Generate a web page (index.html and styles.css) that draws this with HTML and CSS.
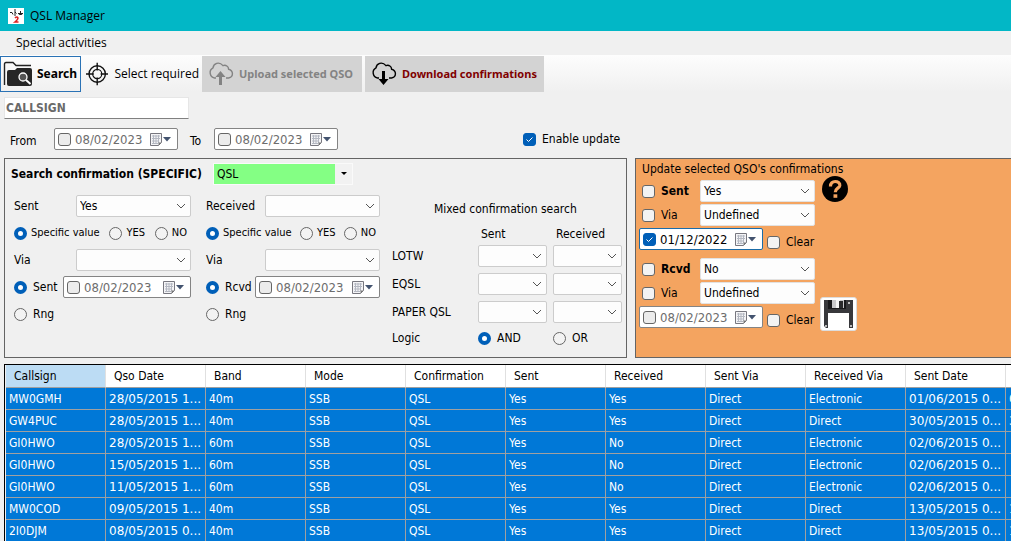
FILE: index.html
```html
<!DOCTYPE html>
<html lang="en">
<head>
<meta charset="utf-8">
<title>QSL Manager</title>
<link rel="stylesheet" href="styles.css">
</head>
<body>
<svg width="0" height="0" class="defs" aria-hidden="true">
  <symbol id="cal" viewBox="0 0 22 13">
    <path d="M.5.5h11v9l-3 3h-8z" fill="#f4f4f6" stroke="#77777f"/>
    <path d="M2 3h8M2 5.500h8M2 8h7M2 10.500h6M3.500 2v9M6 2v9M8.500 2v8" stroke="#b4b8c2" fill="none"/>
    <path d="M8.500 12.500v-3h3z" fill="#777"/>
    <path d="M13 4h8l-4 4.500z" fill="#43536f"/>
  </symbol>
  <symbol id="cloud" viewBox="0 0 26 26">
    <path d="M8 17H6.500a5.500 5.500 0 0 1-1.500-10.200C5.500 2.500 11 0 15 4.600c3-1 5.500.9 5.600 3.600 5.200 1.300 5 8.200 0 8.800H18" fill="none" stroke="currentColor" stroke-width="1.400"/>
  </symbol>
</svg>

<header class="titlebar">
  <svg class="app-icon" viewBox="0 0 16 16" aria-hidden="true"><path fill="#fff" d="M0 0h16v16H0z"/><path d="M2 4.500h2l1 2M7 1v7M7 4l1.500 1.500M10 5.500h5M12.500 3v4M11 7l1.500-2 1.500 2" fill="none" stroke="#222"/><path d="M7 10q2-2 3 0 0 1.500-3 4h3.500" fill="none" stroke="#d22" stroke-width="1.600"/></svg>
  <h1>QSL Manager</h1>
</header>
<nav class="menubar"><button type="button">Special activities</button></nav>

<div class="toolbar">
  <button type="button" class="tool search">
    <svg width="31" height="26" viewBox="0 0 31 26" aria-hidden="true"><path d="M1.500 24V3q0-1.500 1.500-1.500h7l3 3h15" fill="none" stroke="#222" stroke-width="1.400"/><path d="M4 11q0-2 2-2h6l2-2h13q2 0 2 2v14q0 2-2 2H6q-2 0-2-2z" fill="#262626"/><circle cx="20" cy="16" r="4" fill="#555" stroke="#fff" stroke-width="1.300"/><path d="M23 19l4.500 4" stroke="#fff" stroke-width="2"/></svg>
    Search
  </button>
  <button type="button" class="tool required">
    <svg width="26" height="26" viewBox="0 0 26 26" aria-hidden="true"><g fill="none" stroke="#111"><circle cx="13" cy="13" r="9.500" stroke-width="1.600"/><circle cx="13" cy="13" r="5.300" stroke-width="1.300"/><path d="M13 0v9M13 17v9M0 13h9M17 13h9" stroke-width="1.600"/></g></svg>
    Select required
  </button>
  <button type="button" class="tool upload" disabled>
    <svg width="26" height="26" viewBox="0 0 26 26" aria-hidden="true"><use href="#cloud"/><path d="M12.500 10l5 6h-3.500v8h-3v-8H7.500z" fill="currentColor"/></svg>
    Upload selected QSO
  </button>
  <button type="button" class="tool download">
    <svg width="26" height="26" viewBox="0 0 26 26" aria-hidden="true"><use href="#cloud"/><path d="M12.500 24l5-6h-3.500v-8h-3v8H7.500z" fill="currentColor"/></svg>
    <span>Download confirmations</span>
  </button>
</div>

<main>
  <input class="callsign" type="text" placeholder="CALLSIGN" aria-label="Callsign">

  <div class="range">
    <label for="from">From</label>
    <div class="datepick"><input type="checkbox" aria-label="Use from date"><input type="text" id="from" value="08/02/2023"><button type="button" aria-label="Open calendar"><svg><use href="#cal"/></svg></button></div>
    <label for="to">To</label>
    <div class="datepick"><input type="checkbox" aria-label="Use to date"><input type="text" id="to" value="08/02/2023"><button type="button" aria-label="Open calendar"><svg><use href="#cal"/></svg></button></div>
    <label class="enable"><input type="checkbox" checked>Enable update</label>
  </div>

  <div class="panels">
    <section class="panel find">
      <div class="heading">
        <label for="mode">Search confirmation (SPECIFIC)</label>
        <select id="mode" class="mode"><option>QSL</option></select>
      </div>
      <div class="columns">
        <div class="col sent">
          <div class="row split"><label for="s1">Sent</label><select id="s1"><option>Yes</option></select></div>
          <div class="row radios">
            <label><input type="radio" name="sv" checked>Specific value</label>
            <label><input type="radio" name="sv">YES</label>
            <label><input type="radio" name="sv">NO</label>
          </div>
          <div class="row split"><label for="s2">Via</label><select id="s2"><option></option></select></div>
          <div class="row split">
            <label><input type="radio" name="sd" checked>Sent</label>
            <div class="datepick"><input type="checkbox" aria-label="Use sent date"><input type="text" aria-label="Sent date" value="08/02/2023"><button type="button" aria-label="Open calendar"><svg><use href="#cal"/></svg></button></div>
          </div>
          <div class="row"><label><input type="radio" name="sd">Rng</label></div>
        </div>
        <div class="col rcvd">
          <div class="row split"><label for="r1">Received</label><select id="r1"><option></option></select></div>
          <div class="row radios">
            <label><input type="radio" name="rv" checked>Specific value</label>
            <label><input type="radio" name="rv">YES</label>
            <label><input type="radio" name="rv">NO</label>
          </div>
          <div class="row split"><label for="r2">Via</label><select id="r2"><option></option></select></div>
          <div class="row split">
            <label><input type="radio" name="rd" checked>Rcvd</label>
            <div class="datepick"><input type="checkbox" aria-label="Use received date"><input type="text" aria-label="Received date" value="08/02/2023"><button type="button" aria-label="Open calendar"><svg><use href="#cal"/></svg></button></div>
          </div>
          <div class="row"><label><input type="radio" name="rd">Rng</label></div>
        </div>
        <div class="mixed">
          <h2>Mixed confirmation search</h2>
          <div class="mixgrid">
            <span></span><span class="mixhead">Sent</span><span class="mixhead">Received</span>
            <span>LOTW</span><select aria-label="LOTW sent"></select><select aria-label="LOTW received"></select>
            <span>EQSL</span><select aria-label="EQSL sent"></select><select aria-label="EQSL received"></select>
            <span>PAPER QSL</span><select aria-label="Paper QSL sent"></select><select aria-label="Paper QSL received"></select>
            <span class="logic">Logic</span>
            <label class="logic"><input type="radio" name="logic" checked>AND</label>
            <label class="logic"><input type="radio" name="logic">OR</label>
          </div>
        </div>
      </div>
    </section>

    <section class="panel update">
      <h2>Update selected QSO's confirmations</h2>
      <div class="update-body">
        <div class="fields">
          <div class="field"><label class="strong"><input type="checkbox">Sent</label><select aria-label="Sent"><option>Yes</option></select></div>
          <div class="field"><label><input type="checkbox">Via</label><select aria-label="Sent via"><option>Undefined</option></select></div>
          <div class="dateline">
            <div class="datepick active"><input type="checkbox" checked aria-label="Use sent date"><input type="text" aria-label="Sent date" value="01/12/2022"><button type="button" aria-label="Open calendar"><svg><use href="#cal"/></svg></button></div>
            <label><input type="checkbox">Clear</label>
          </div>
          <div class="field second"><label class="strong"><input type="checkbox">Rcvd</label><select aria-label="Received"><option>No</option></select></div>
          <div class="field"><label><input type="checkbox">Via</label><select aria-label="Received via"><option>Undefined</option></select></div>
          <div class="dateline">
            <div class="datepick"><input type="checkbox" aria-label="Use received date"><input type="text" aria-label="Received date" value="08/02/2023"><button type="button" aria-label="Open calendar"><svg><use href="#cal"/></svg></button></div>
            <label><input type="checkbox">Clear</label>
          </div>
        </div>
        <div class="actions">
          <button type="button" class="help" aria-label="Help"><svg width="26" height="26" viewBox="0 0 26 26"><circle cx="13" cy="13" r="13"/><path d="M8.500 10.500C8 3.500 18.500 4.500 17.800 9.500 17.300 12.500 13.300 12 13.300 16.300" fill="none" stroke="#f4a460" stroke-width="3.200"/><path d="M11.500 18.300h3.800v3.500h-3.800z" fill="#f4a460"/></svg></button>
          <button type="button" class="save" aria-label="Save"><svg width="29" height="28" viewBox="0 0 29 28"><path d="M0 0h29v28H2l-2-2z" fill="#38383b"/><path d="M4 0h18v9H4z" fill="#19191b"/><path d="M8 0h12v8H8z" fill="#c8c8ca"/><path d="M12 0h4v8h-4z" fill="#f4f4f4"/><path d="M15 1h4v7h-4z" fill="#29292b"/><path d="M4 13h21v15H4z" fill="#fff"/><path d="M24 2h2v2h-2zM1 25h2v2H1zM26 25h2v2h-2z" fill="#bbb"/></svg></button>
        </div>
      </div>
    </section>
  </div>

  <div class="grid-wrap">
    <table>
      <thead><tr><th class="current">Callsign</th><th>Qso Date</th><th>Band</th><th>Mode</th><th>Confirmation</th><th>Sent</th><th>Received</th><th>Sent Via</th><th>Received Via</th><th>Sent Date</th><th></th></tr></thead>
      <tbody>
        <tr><td>MW0GMH</td><td class="date">28/05/2015 1...</td><td>40m</td><td>SSB</td><td>QSL</td><td>Yes</td><td>Yes</td><td>Direct</td><td>Electronic</td><td class="date">01/06/2015 0...</td><td class="date">0</td></tr>
        <tr><td>GW4PUC</td><td class="date">28/05/2015 1...</td><td>40m</td><td>SSB</td><td>QSL</td><td>Yes</td><td>Yes</td><td>Direct</td><td>Direct</td><td class="date">30/05/2015 0...</td><td class="date">3</td></tr>
        <tr><td>GI0HWO</td><td class="date">28/05/2015 1...</td><td>60m</td><td>SSB</td><td>QSL</td><td>Yes</td><td>No</td><td>Direct</td><td>Electronic</td><td class="date">02/06/2015 0...</td><td></td></tr>
        <tr><td>GI0HWO</td><td class="date">15/05/2015 1...</td><td>60m</td><td>SSB</td><td>QSL</td><td>Yes</td><td>No</td><td>Direct</td><td>Electronic</td><td class="date">02/06/2015 0...</td><td></td></tr>
        <tr><td>GI0HWO</td><td class="date">11/05/2015 1...</td><td>60m</td><td>SSB</td><td>QSL</td><td>Yes</td><td>No</td><td>Direct</td><td>Electronic</td><td class="date">02/06/2015 0...</td><td></td></tr>
        <tr><td>MW0COD</td><td class="date">09/05/2015 1...</td><td>40m</td><td>SSB</td><td>QSL</td><td>Yes</td><td>Yes</td><td>Direct</td><td>Direct</td><td class="date">13/05/2015 0...</td><td class="date">1</td></tr>
        <tr><td>2I0DJM</td><td class="date">08/05/2015 0...</td><td>40m</td><td>SSB</td><td>QSL</td><td>Yes</td><td>Yes</td><td>Direct</td><td>Direct</td><td class="date">13/05/2015 0...</td><td class="date">1</td></tr>
      </tbody>
    </table>
  </div>
</main>
</body>
</html>
```
FILE: styles.css
```css
* { box-sizing: border-box; }
body {
  margin: 0;
  background: #f0f0f0;
  color: #000;
  font: 12px/16px "DejaVu Sans Condensed", "DejaVu Sans", sans-serif;
}
.defs { position: absolute; }
button, input, select { font: inherit; color: inherit; margin: 0; }
button { border: 0; background: none; padding: 0; }
h1, h2 { margin: 0; font-size: 12px; font-weight: normal; }
label { display: flex; align-items: center; white-space: nowrap; }

.titlebar {
  display: flex; align-items: center; gap: 6px;
  height: 31px; padding-left: 8px;
  background: #02b7c6;
  font-family: "Open Sans", sans-serif;
}
.app-icon { width: 16px; height: 16px; }
.menubar {
  display: flex; height: 24px; padding-left: 16px;
  font-family: "Open Sans", sans-serif;
}
.toolbar {
  display: flex; gap: 3px; height: 37px; padding-top: 1px;
  background: linear-gradient(#fdfdfd, #f0f0f0);
  font-family: "Noto Sans", sans-serif;
}
.tool { display: flex; align-items: center; height: 36px; padding: 0 6px; gap: 6px; white-space: nowrap; }
.search { width: 81px; border: 1px solid #2a72b5; padding: 0 0 0 2px; gap: 3px; font-weight: bold; }
.required { width: 115px; padding: 0 0 0 2px; font-family: "Open Sans", sans-serif; }
.upload, .download { gap: 5px; background: #d3d3d3; font-size: 11px; font-weight: bold; }
.upload { width: 160px; color: #838383; }
.download { width: 179px; }
.download span { color: #800000; }

main { padding: 5px 0 0 4px; }
.callsign {
  display: block; width: 185px; height: 22px; padding: 0 1px;
  border: 1px solid #e6e6e6; border-bottom-color: #808080;
  background: #fff; font-weight: bold;
}
.callsign::placeholder { color: #6a6a6a; opacity: 1; }

.range { display: flex; align-items: center; height: 22px; margin: 9px 0 8px; padding-left: 6px; }
.range > label:first-child { width: 44px; }
.range > label:nth-of-type(2) { width: 36px; padding-left: 12px; }
.range > label:not(.enable) { padding-top: 4px; }
.range .enable { margin-left: 185px; }

input[type="checkbox"] {
  appearance: none; flex: none; width: 13px; height: 13px; margin-right: 6px;
  border: 1px solid #666; border-radius: 3px; background: #f3f3f3;
}
input[type="checkbox"]:checked {
  border-color: #005fb8;
  background: #005fb8 url("data:image/svg+xml,%3Csvg xmlns='http://www.w3.org/2000/svg' viewBox='0 0 11 11'%3E%3Cpath d='M2.500 5.500l2 2 4-4' fill='none' stroke='white'/%3E%3C/svg%3E") center / 11px no-repeat;
}
input[type="radio"] {
  appearance: none; flex: none; width: 13px; height: 13px; margin-right: 6px;
  border: 1px solid #666; border-radius: 50%; background: #f3f3f3;
}
input[type="radio"]:checked { border: 4px solid #005fb8; background: #fff; }

select {
  appearance: none; min-width: 0; height: 22px; padding: 0 16px 0 3px;
  border: 1px solid #ccc; border-radius: 2px;
  background: #fdfdfd url("data:image/svg+xml,%3Csvg xmlns='http://www.w3.org/2000/svg' viewBox='0 0 10 6'%3E%3Cpath d='M1 1l4 4 4-4' fill='none' stroke='%23555'/%3E%3C/svg%3E") right 4px center / 10px 6px no-repeat;
}

.datepick {
  display: flex; align-items: center; width: 124px; height: 22px; padding: 0 5px 0 3px;
  border: 1px solid #848484; border-radius: 2px; background: #fff;
}
.datepick input[type="checkbox"] { margin-right: 4px; }
.datepick input[type="checkbox"]:not(:checked) { background: #ececec; }
.datepick input[type="text"] {
  flex: 1; min-width: 0; height: 20px; padding: 0; border: 0; background: none;
  color: #6d6d6d; font-size: 13px;
}
.datepick button { display: flex; }
.datepick svg { width: 22px; height: 13px; }
.datepick.active { border-color: #1b6ca8; }
.datepick.active input[type="text"] { color: #000; }

.panels { display: flex; gap: 8px; }
.panel { height: 200px; border: 1px solid #646464; }
.find { flex: none; padding: 4px 4px 0 9px; }
.heading { display: flex; align-items: center; height: 22px; margin-left: -3px; }
.heading label { width: 202px; font-weight: bold; }
.mode {
  width: 140px; height: 22px; border: 1px solid #fafafa; border-radius: 0;
  background:
    url("data:image/svg+xml,%3Csvg xmlns='http://www.w3.org/2000/svg' viewBox='0 0 6 4'%3E%3Cpath d='M0 0h6L3 3z'/%3E%3C/svg%3E") right 5px center / 6px 4px no-repeat,
    linear-gradient(to left, #f2f2f2 17px, #84ff84 17px);
}
.columns { display: flex; margin-top: 10px; }
.col { display: flex; flex-direction: column; gap: 5px; }
.sent { width: 177px; }
.rcvd { width: 174px; margin-left: 15px; }
.row { display: flex; align-items: center; height: 22px; }
.split { justify-content: space-between; }
.split select { width: 115px; }
.split .datepick { width: 128px; }
.rcvd .split .datepick { width: 125px; }
.radios { font-size: 11px; justify-content: space-between; padding-right: 4px; }
.radios input[type="radio"] { margin-right: 4px; }
.mixed { width: 230px; margin-left: 12px; }
.mixed h2 { padding-left: 42px; line-height: 28px; }
.mixgrid {
  display: grid; grid-template-columns: 1fr 69px 69px; column-gap: 6px;
  grid-template-rows: 22px repeat(3, 28px) 22px; align-items: start; line-height: 22px;
}
.mixhead { padding-left: 3px; }
.logic { line-height: 18px; }

.update { flex: 1; min-width: 0; padding: 1px 0 0 3px; border-right: 0; background: #f4a460; overflow: hidden; }
.update h2 { padding-left: 3px; line-height: 18px; white-space: nowrap; }
.update-body { display: flex; gap: 5px; margin-top: 2px; }
.fields { display: flex; flex-direction: column; gap: 2px; width: 176px; }
.field { display: flex; align-items: center; justify-content: space-between; padding-left: 3px; }
.field select { width: 115px; border-color: #e2e2e2; }
.second { margin-top: 6px; }
.strong { font-weight: bold; }
.dateline { display: flex; gap: 4px; }
.dateline label { padding-top: 6px; }
.actions { display: flex; flex-direction: column; justify-content: space-between; align-items: flex-start; margin: -4px 0 -3px; }
.help { display: flex; margin-left: 2px; }
.save { display: flex; padding: 2px 3px; border: 1px solid #ddd; border-radius: 3px; background: #fff; }

.grid-wrap { margin-top: 6px; padding-left: 1px; border: 1px solid #000; border-width: 1px 0 0 1px; overflow: hidden; }
table { width: 1100px; table-layout: fixed; border-collapse: separate; border-spacing: 0; }
th {
  height: 23px; padding: 0 0 0 8px; text-align: left; font-weight: normal; white-space: nowrap;
  background: #fff; border-right: 1px solid #e0e0e0; border-bottom: 1px solid #a0a0a0;
}
th.current { background: #bcdcf4; }
td {
  height: 22px; padding: 0 0 0 3px; white-space: nowrap; color: #fff;
  background: #0078d7; border-right: 1px solid #a0a0a0; border-bottom: 1px solid #a0a0a0;
}
.date { font-family: "DejaVu Sans", sans-serif; }
```
